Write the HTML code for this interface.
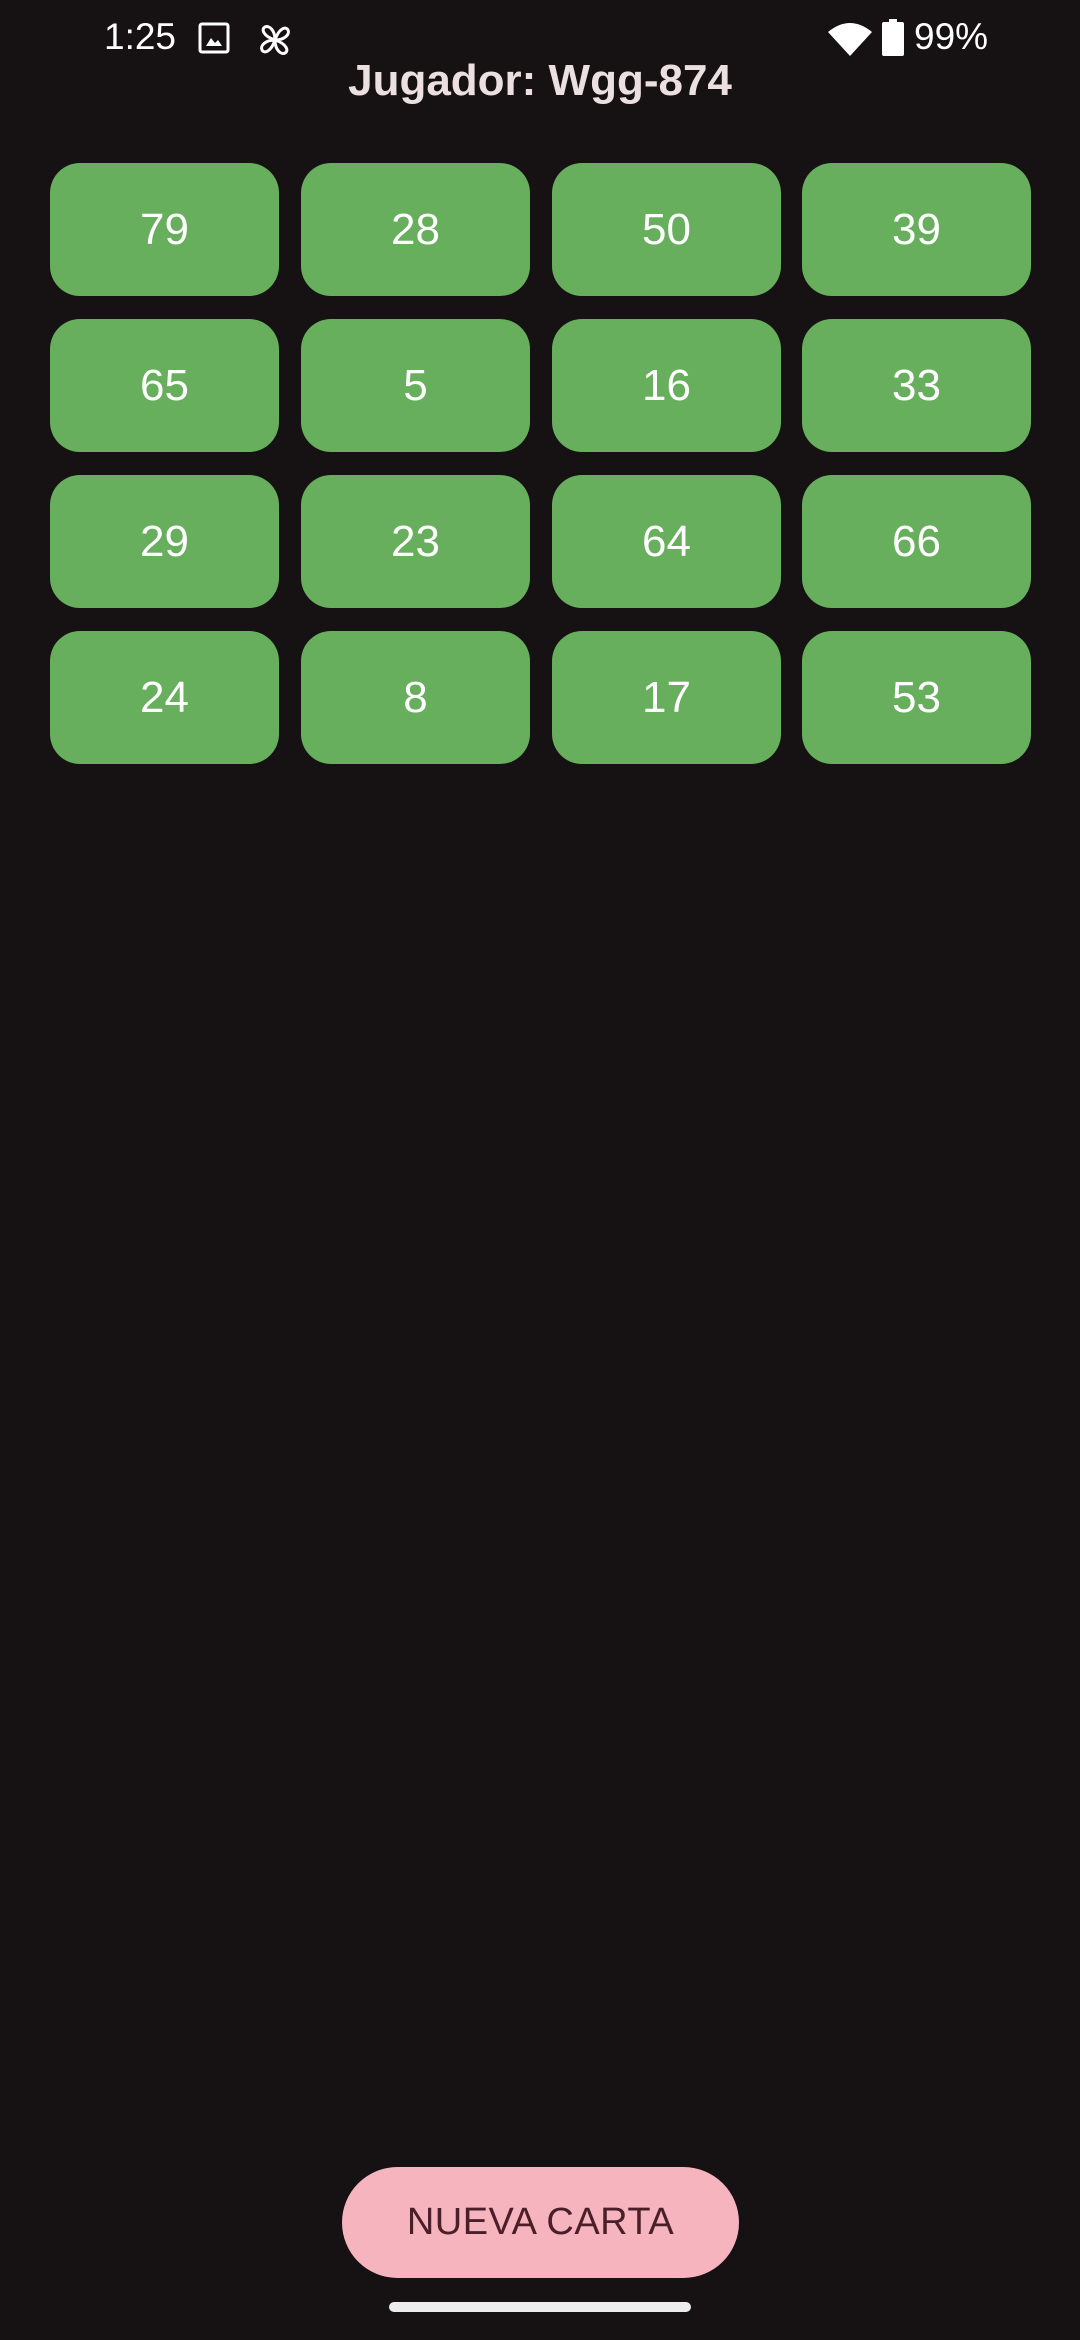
<!DOCTYPE html>
<html><head><meta charset="utf-8"><style>
html,body{margin:0;padding:0;}
body{width:1080px;height:2340px;background:#161112;position:relative;overflow:hidden;font-family:"Liberation Sans",sans-serif;}
.abs{position:absolute;}
.t{color:#fff;font-size:37px;top:16px;}
.title{left:0;width:1080px;text-align:center;top:56px;font-size:44px;font-weight:bold;color:#ecdfe2;}
.cell{position:absolute;width:229px;height:133px;background:#67ae5d;border-radius:30px;color:#fff;font-size:44px;display:flex;align-items:center;justify-content:center;}
.btn{left:342px;top:2167px;width:397px;height:111px;border-radius:56px;background:#f5b4be;color:#4b1f2a;font-size:38px;display:flex;align-items:center;justify-content:center;letter-spacing:0.5px;}
.bar{left:389px;top:2302px;width:302px;height:10px;border-radius:5px;background:#ececec;}
</style></head><body>
<div class="abs t" style="left:104px;">1:25</div>
<svg class="abs" style="left:198px;top:22px" width="32" height="32" viewBox="0 0 32 32"><rect x="2" y="2" width="28" height="28" rx="2" fill="none" stroke="#fff" stroke-width="3"/><path d="M8 24 L13 16 L17 21 L20 18 L24 24 Z" fill="#fff"/></svg>
<svg class="abs" style="left:255px;top:20px" width="40" height="40" viewBox="0 0 40 40" fill="none" stroke="#fff" stroke-width="3"><path d="M20 20 C20 10 14 5 10 7 C6 9 8 16 20 20"/><path d="M20 20 C30 20 35 14 33 10 C31 6 24 8 20 20"/><path d="M20 20 C20 30 26 35 30 33 C34 31 32 24 20 20"/><path d="M20 20 C10 20 5 26 7 30 C9 34 16 32 20 20"/></svg>
<svg class="abs" style="left:828px;top:22px" width="44" height="34" viewBox="0 0 44 34"><path d="M0 10 Q22 -8 44 10 L22 34 Z" fill="#fff"/></svg>
<svg class="abs" style="left:882px;top:19px" width="22" height="37" viewBox="0 0 22 37"><rect x="7" y="0" width="8" height="4" fill="#fff"/><rect x="0" y="3" width="22" height="34" rx="2" fill="#fff"/></svg>
<div class="abs t" style="left:914px;">99%</div>
<div class="abs title">Jugador: Wgg-874</div>

<div class="cell" style="left:50px;top:163px">79</div>
<div class="cell" style="left:301px;top:163px">28</div>
<div class="cell" style="left:552px;top:163px">50</div>
<div class="cell" style="left:802px;top:163px">39</div>
<div class="cell" style="left:50px;top:319px">65</div>
<div class="cell" style="left:301px;top:319px">5</div>
<div class="cell" style="left:552px;top:319px">16</div>
<div class="cell" style="left:802px;top:319px">33</div>
<div class="cell" style="left:50px;top:475px">29</div>
<div class="cell" style="left:301px;top:475px">23</div>
<div class="cell" style="left:552px;top:475px">64</div>
<div class="cell" style="left:802px;top:475px">66</div>
<div class="cell" style="left:50px;top:631px">24</div>
<div class="cell" style="left:301px;top:631px">8</div>
<div class="cell" style="left:552px;top:631px">17</div>
<div class="cell" style="left:802px;top:631px">53</div>

<div class="abs btn">NUEVA CARTA</div>
<div class="abs bar"></div>
</body></html>
